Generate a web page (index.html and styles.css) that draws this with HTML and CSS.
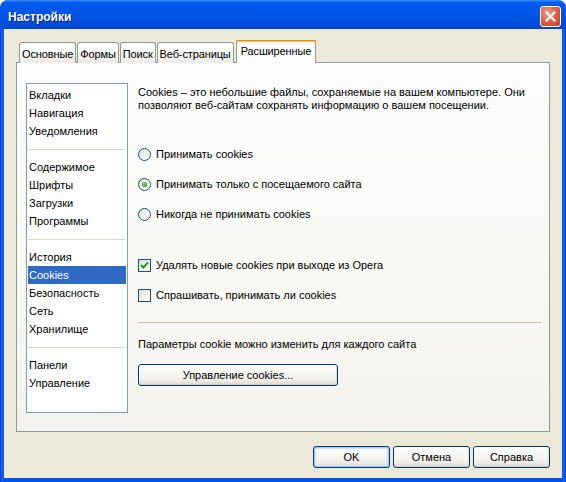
FILE: index.html
```html
<!DOCTYPE html>
<html lang="ru">
<head>
<meta charset="utf-8">
<title>Настройки</title>
<link rel="stylesheet" href="styles.css">
</head>
<body>
<div class="window">
  <div class="titlebar">
    <span class="title">Настройки</span>
    <span class="close">
      <svg width="11" height="11" viewBox="0 0 11 11"><path d="M1.5 1.5 L9.5 9.5 M9.5 1.5 L1.5 9.5" stroke="#fff" stroke-width="2.2" stroke-linecap="square"/></svg>
    </span>
  </div>
  <div class="client">
    <div class="tabs">
      <div class="tab">Основные</div>
      <div class="tab">Формы</div>
      <div class="tab">Поиск</div>
      <div class="tab">Веб-страницы</div>
      <div class="tab active">Расширенные</div>
    </div>
    <div class="panel">
      <ul class="list">
        <li>Вкладки</li>
        <li>Навигация</li>
        <li>Уведомления</li>
        <li class="sep"></li>
        <li>Содержимое</li>
        <li>Шрифты</li>
        <li>Загрузки</li>
        <li>Программы</li>
        <li class="sep"></li>
        <li>История</li>
        <li class="selected">Cookies</li>
        <li>Безопасность</li>
        <li>Сеть</li>
        <li>Хранилище</li>
        <li class="sep"></li>
        <li>Панели</li>
        <li>Управление</li>
      </ul>
      <div class="content">
        <p class="intro">Cookies – это небольшие файлы, сохраняемые на вашем компьютере. Они<br>позволяют веб-сайтам сохранять информацию о вашем посещении.</p>
        <div class="options radios">
          <label class="opt"><span class="radio"></span>Принимать cookies</label>
          <label class="opt"><span class="radio checked"></span>Принимать только с посещаемого сайта</label>
          <label class="opt"><span class="radio"></span>Никогда не принимать cookies</label>
        </div>
        <div class="options checks">
          <label class="opt"><span class="check"><svg width="11" height="11" viewBox="0 0 11 11"><path d="M2 5 L4.3 7.5 L9 2.5" fill="none" stroke="#21a121" stroke-width="2"/></svg></span>Удалять новые cookies при выходе из Opera</label>
          <label class="opt"><span class="check"></span>Спрашивать, принимать ли cookies</label>
        </div>
        <div class="divider"></div>
        <p class="note">Параметры cookie можно изменить для каждого сайта</p>
        <button class="btn wide">Управление cookies...</button>
      </div>
    </div>
    <div class="buttons">
      <button class="btn default">OK</button>
      <button class="btn">Отмена</button>
      <button class="btn">Справка</button>
    </div>
  </div>
</div>
</body>
</html>
```
FILE: styles.css
```css
* { box-sizing: border-box; }
html, body { margin: 0; padding: 0; background: #ffffff; }
body { font-family: "Liberation Sans", Arial, sans-serif; font-size: 11px; color: #000; }

.window {
  width: 566px;
  height: 482px;
  display: flex;
  flex-direction: column;
  border-radius: 8px 8px 0 0;
  background: linear-gradient(to right, #0831d9 0, #166aee 2px, #0055e5 4px, #0055e5 calc(100% - 4px), #166aee calc(100% - 2px), #0831d9 100%);
  overflow: hidden;
}

.titlebar {
  height: 29px;
  flex: none;
  display: flex;
  align-items: flex-start;
  justify-content: space-between;
  padding: 0 5px 0 8px;
  background: linear-gradient(to bottom, #3d95ff 0, #0a61ee 2px, #0058ee 5px, #0055e5 45%, #0050e0 75%, #0046cf 100%);
  border-radius: 8px 8px 0 0;
}
.title {
  margin-top: 9px;
  color: #fff;
  font-weight: bold;
  font-size: 12px;
  line-height: 16px;
  text-shadow: 1px 1px 0 #0a1883;
}
.close {
  margin-top: 6px;
  width: 21px;
  height: 21px;
  border: 1px solid #fff;
  border-radius: 3px;
  background: radial-gradient(circle at 35% 30%, #f2a48c 0, #e2614a 45%, #c63b22 100%);
  display: flex;
  align-items: center;
  justify-content: center;
}

.client {
  flex: 1;
  margin: 0 4px 4px 4px;
  background: #ece9d8;
  padding: 11px 12px 10px 12px;
  display: flex;
  flex-direction: column;
}

.tabs {
  display: flex;
  align-items: flex-end;
  height: 23px;
  margin-bottom: -1px;
  padding-left: 3px;
  gap: 1px;
  position: relative;
  z-index: 1;
}
.tab {
  height: 21px;
  padding: 0 2px;
  border: 1px solid #919b9c;
  border-bottom: none;
  border-radius: 3px 3px 0 0;
  background: linear-gradient(to bottom, #ffffff 0, #f8f8f6 40%, #ecebe6 100%);
  line-height: 22px;
  letter-spacing: -0.12px;
  white-space: nowrap;
}
.tab.active {
  height: 23px;
  padding: 0 4px;
  margin-left: 1px;
  background: #fcfcfe;
  border-top: none;
  box-shadow: inset 0 2px 0 #ffc83c;
  border-top-left-radius: 3px;
  border-top-right-radius: 3px;
  line-height: 22px;
  position: relative;
}
.tab.active::before {
  content: "";
  position: absolute;
  left: -1px;
  right: -1px;
  top: 0;
  height: 1px;
  background: #e68b2c;
  border-radius: 3px 3px 0 0;
}

.panel {
  height: 370px;
  border: 1px solid #919b9c;
  background: linear-gradient(to bottom, #fcfcfe 0, #f9f9f6 50%, #f4f3ee 100%);
  display: flex;
  align-items: flex-start;
  padding: 20px 8px 18px 9px;
  gap: 10px;
}

.list {
  list-style: none;
  margin: 0;
  width: 102px;
  height: 330px;
  flex: none;
  background: #fff;
  border: 1px solid #7f9db9;
  padding: 2px 1px 0 1px;
}
.list li {
  height: 18px;
  line-height: 18px;
  padding-left: 1px;
  white-space: nowrap;
}
.list li.selected {
  background: #316ac5;
  color: #fff;
}
.list li.sep {
  position: relative;
}
.list li.sep::after {
  content: "";
  position: absolute;
  left: 0;
  right: 0;
  top: 9px;
  height: 1px;
  background: #dcdad0;
}

.content {
  flex: 1;
  padding-top: 3px;
  display: flex;
  flex-direction: column;
  align-items: flex-start;
}
.intro {
  margin: 0;
  line-height: 13px;
  white-space: nowrap;
}
.options {
  display: flex;
  flex-direction: column;
  gap: 17px;
}
.radios { margin-top: 36px; }
.checks { margin-top: 38px; }
.opt {
  display: flex;
  align-items: center;
  height: 13px;
  line-height: 13px;
  gap: 5px;
  white-space: nowrap;
}
.radio {
  width: 13px;
  height: 13px;
  border-radius: 50%;
  border: 1px solid #1c5180;
  background: linear-gradient(135deg, #dcd9cf 0, #f1efe8 45%, #ffffff 100%);
  display: flex;
  align-items: center;
  justify-content: center;
}
.radio.checked::after {
  content: "";
  width: 5px;
  height: 5px;
  border-radius: 50%;
  background: radial-gradient(circle at 35% 35%, #7ee07a 0, #21a121 70%);
}
.check {
  width: 13px;
  height: 13px;
  border: 1px solid #1c5180;
  background: linear-gradient(135deg, #dcdcd7 0, #f2f2ee 50%, #ffffff 100%);
  display: flex;
  align-items: center;
  justify-content: center;
}

.divider {
  align-self: stretch;
  height: 1px;
  margin-top: 20px;
  background: #c5c2b2;
}
.note {
  margin: 15px 0 0 0;
  line-height: 13px;
}

.btn {
  font-family: "Liberation Sans", Arial, sans-serif;
  font-size: 11px;
  color: #000;
  height: 22px;
  padding: 0;
  border: 1px solid #003c74;
  border-radius: 3px;
  background: linear-gradient(to bottom, #ffffff 0, #f7f7f4 35%, #efeee8 75%, #dcd8cc 100%);
  box-shadow: inset 0 -1px 0 #d6d0c5, inset -1px 0 0 #e3e0d6;
}
.btn.wide {
  margin-top: 13px;
  width: 200px;
}

.buttons {
  margin-top: 14px;
  display: flex;
  justify-content: flex-end;
  gap: 3px;
}
.buttons .btn { width: 77px; }
.btn.default {
  box-shadow: inset 0 0 0 1px #a8c6f4, inset 0 0 0 2px #cee0fb;
}
```
